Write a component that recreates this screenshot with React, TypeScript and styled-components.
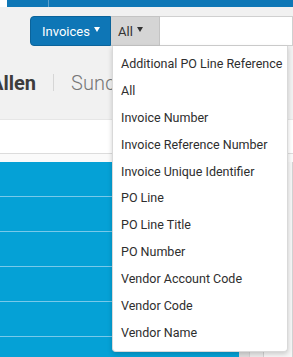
import styled, { createGlobalStyle } from "styled-components";

const GlobalStyle = createGlobalStyle`
  body {
    margin: 0;
    overflow: hidden;
    font-family: Roboto, "Liberation Sans", sans-serif;
  }
`;

const Page = styled.div`
  position: relative;
  width: 293px;
  height: 357px;
  overflow: hidden;
  background: #f1f1f1;
`;

const TopStrip = styled.div`
  display: flex;
  height: 7px;
  background: #fff;
  padding-left: 7px;
`;

const TopSegment = styled.div<{ $w?: number }>`
  background: #0f77b6;
  ${(p) => (p.$w ? `width: ${p.$w}px;` : "flex: 1;")}
  border-right: 1px solid #5d9fcb;
  &:last-child {
    border-right: none;
  }
`;

const SearchRow = styled.div`
  display: flex;
  height: 30px;
  margin: 9px 0 0 30px;
`;

const ScopeButton = styled.div`
  display: flex;
  align-items: center;
  gap: 4px;
  width: 81px;
  padding-left: 11px;
  box-sizing: border-box;
  background: #0e76b6;
  border: 1px solid #0b639a;
  border-radius: 4px 0 0 4px;
  color: #fff;
  font-size: 13px;
`;

const FieldButton = styled.div`
  display: flex;
  align-items: center;
  gap: 4px;
  width: 49px;
  padding-left: 7px;
  box-sizing: border-box;
  background: #d5d5d5;
  border: 1px solid #c4c4c4;
  border-left: none;
  color: #333;
  font-size: 13px;
`;

const Caret = styled.span`
  width: 0;
  height: 0;
  margin-bottom: 3px;
  border-left: 3.5px solid transparent;
  border-right: 3.5px solid transparent;
  border-top: 5px solid currentColor;
`;

const SearchInput = styled.div`
  flex: 1;
  background: #fff;
  border: 1px solid #d0d0d0;
  border-left: none;
`;

const TitleRow = styled.div`
  display: flex;
  align-items: center;
  height: 73px;
  margin-left: -10px;
`;

const Name = styled.span`
  font-size: 20px;
  font-weight: 700;
  color: #3d3d3d;
`;

const Divider = styled.span`
  width: 1px;
  height: 17px;
  margin: 0 17px 0 17px;
  background: #d6d6d6;
`;

const SubTitle = styled.span`
  font-size: 20px;
  font-weight: 300;
  color: #777;
`;

const TabStrip = styled.div`
  height: 33px;
  background: #fff;
  border-top: 1px solid #e6e6e6;
  border-bottom: 1px solid #dcdcdc;
`;

const Gap = styled.div`
  height: 8px;
  background: #fafafa;
`;

const TableArea = styled.div`
  display: flex;
  height: 200px;
`;

const BlueColumn = styled.div`
  width: 242px;
  background: #05a1d6;
`;

const BlueRow = styled.div`
  height: 34px;
  border-bottom: 1px solid #78c9ea;
  color: #fff;
  font-size: 13px;
  display: flex;
  align-items: center;
  margin-left: -7px;
`;

const SidePanel = styled.div`
  flex: 1;
  display: flex;
`;

const SideCell = styled.div<{ $w: number; $bg: string }>`
  width: ${(p) => p.$w}px;
  background: ${(p) => p.$bg};
  border-right: 1px solid #d2d2d2;
`;

const Menu = styled.div`
  position: absolute;
  left: 112px;
  top: 46px;
  width: 176px;
  height: 306px;
  box-sizing: border-box;
  padding: 5px 0 0;
  background: #fff;
  border: 1px solid #d9d9d9;
  border-top: none;
  border-radius: 0 0 4px 4px;
  box-shadow: 0 2px 5px rgba(0, 0, 0, 0.18);
`;

const MenuItem = styled.div`
  height: 26.9px;
  line-height: 26.9px;
  padding-left: 8px;
  font-size: 12.5px;
  color: #2e2e2e;
  white-space: nowrap;
`;

const fields = [
  "Additional PO Line Reference",
  "All",
  "Invoice Number",
  "Invoice Reference Number",
  "Invoice Unique Identifier",
  "PO Line",
  "PO Line Title",
  "PO Number",
  "Vendor Account Code",
  "Vendor Code",
  "Vendor Name",
];

const rows = ["", "", "", "", "s", ""];

export default function App() {
  return (
    <>
      <GlobalStyle />
      <Page>
        <TopStrip>
          <TopSegment $w={41} />
          <TopSegment />
        </TopStrip>
        <SearchRow>
          <ScopeButton>
            Invoices <Caret />
          </ScopeButton>
          <FieldButton>
            All <Caret />
          </FieldButton>
          <SearchInput />
        </SearchRow>
        <TitleRow>
          <Name>Allen</Name>
          <Divider />
          <SubTitle>Sunday</SubTitle>
        </TitleRow>
        <TabStrip />
        <Gap />
        <TableArea>
          <BlueColumn>
            {rows.map((r, i) => (
              <BlueRow key={i}>{r}</BlueRow>
            ))}
          </BlueColumn>
          <SidePanel>
            <SideCell $w={10} $bg="#dedede" />
            <SideCell $w={13} $bg="#ececec" />
            <SideCell $w={28} $bg="#f6f6f6" />
          </SidePanel>
        </TableArea>
        <Menu>
          {fields.map((f) => (
            <MenuItem key={f}>{f}</MenuItem>
          ))}
        </Menu>
      </Page>
    </>
  );
}
